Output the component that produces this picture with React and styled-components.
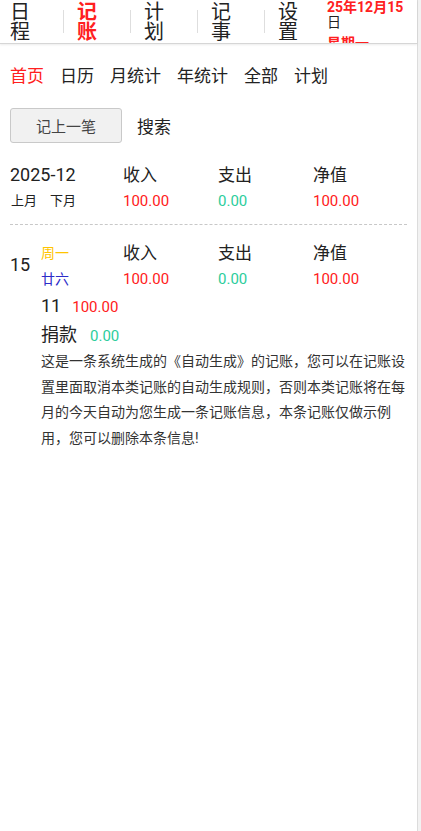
import React from 'react';
import styled, { createGlobalStyle } from 'styled-components';

const RED = '#ff2020';
const GREEN = '#2ccd9c';

const GlobalStyle = createGlobalStyle`
    html, body {
        margin: 0;
        padding: 0;
        background: #f2f2f2;
    }
    body {
        font-family: Roboto, "Noto Sans CJK SC", sans-serif;
        color: #222;
    }
`;

const Page = styled.div`
    width: 417px;
    min-height: 831px;
    background: #fff;
    border-right: 1px solid #dcdcdc;
`;

const Header = styled.div`
    height: 43px;
    display: flex;
    align-items: center;
    padding-left: 10px;
    border-bottom: 1px solid #d6d6d6;
    box-shadow: 0 1px 2px rgba(0, 0, 0, 0.08);
    overflow: hidden;
`;

const Tab = styled.div`
    width: 20px;
    font-size: 20px;
    line-height: 20px;
    color: ${(p) => (p.$active ? RED : '#222')};
    font-weight: ${(p) => (p.$active ? 700 : 400)};
    margin-right: 33px;
`;

const Divider = styled.div`
    width: 1px;
    height: 23px;
    background: #dedede;
    margin-right: 13px;
`;

const DateBlock = styled.div`
    align-self: flex-start;
    width: 80px;
    margin-left: -4px;
    font-size: 14px;
    line-height: 15px;
    font-weight: 700;
    color: ${RED};
`;

const DateDay = styled.span`
    font-weight: 400;
    color: #222;
`;

const Week = styled.div`
    margin-top: 6px;
`;

const Content = styled.div`
    padding: 0 10px;
`;

const SubNav = styled.div`
    display: flex;
    gap: 16px;
    margin-top: 20px;
    font-size: 17px;
    line-height: 24px;
`;

const NavItem = styled.span`
    color: ${(p) => (p.$active ? RED : '#222')};
`;

const Actions = styled.div`
    display: flex;
    align-items: center;
    gap: 15px;
    margin-top: 20px;
`;

const AddButton = styled.button`
    width: 112px;
    height: 35px;
    background: #f1f1f1;
    border: 1px solid #c9c9c9;
    border-radius: 3px;
    font-family: inherit;
    font-size: 15px;
    color: #444;
    padding: 0;
`;

const Search = styled.span`
    font-size: 17px;
    color: #222;
`;

const Summary = styled.div`
    display: grid;
    grid-template-columns: 113px 95px 95px 1fr;
    margin-top: 19px;
    padding-bottom: 10px;
    border-bottom: 1px dashed #c8c8c8;
`;

const Month = styled.div`
    font-size: 18px;
    line-height: 26px;
`;

const Label = styled.div`
    font-size: 17px;
    line-height: 26px;
`;

const Switch = styled.div`
    display: flex;
    gap: 13px;
    font-size: 13px;
    line-height: 26px;
    padding-left: 1px;
`;

const Amount = styled.div`
    font-size: 15px;
    line-height: 26px;
    color: ${(p) => (p.$kind === 'out' ? GREEN : RED)};
`;

const DayBlock = styled.div`
    display: grid;
    grid-template-columns: 31px 82px 95px 95px 1fr;
    grid-template-rows: 26px 26px;
    margin-top: 15px;
`;

const DayNum = styled.div`
    grid-row: 1 / span 2;
    align-self: center;
    font-size: 18px;
    margin-top: -3px;
`;

const WeekDay = styled.div`
    font-size: 14px;
    line-height: 26px;
    color: ${(p) => p.$color};
`;

const Detail = styled.div`
    padding-left: 31px;
`;

const ItemRow = styled.div`
    display: flex;
    align-items: baseline;
    gap: ${(p) => p.$gap}px;
    line-height: 30px;
    margin-top: ${(p) => p.$top || 0}px;
`;

const ItemName = styled.span`
    font-size: 18px;
`;

const ItemAmount = styled.span`
    font-size: 15px;
    color: ${(p) => (p.$kind === 'out' ? GREEN : RED)};
`;

const Note = styled.p`
    margin: -2px 0 0;
    font-size: 14px;
    line-height: 25.5px;
    color: #333;
`;

const App = () => {
    const tabs = ['日程', '记账', '计划', '记事', '设置'];
    const navs = ['首页', '日历', '月统计', '年统计', '全部', '计划'];

    return (
        <Page>
            <GlobalStyle />
            <Header>
                {tabs.map((t, i) => (
                    <React.Fragment key={t}>
                        <Tab $active={i === 1}>{t}</Tab>
                        {i < tabs.length - 1 && <Divider />}
                    </React.Fragment>
                ))}
                <DateBlock>
                    25年12月15<DateDay>日</DateDay>
                    <Week>星期一</Week>
                </DateBlock>
            </Header>
            <Content>
                <SubNav>
                    {navs.map((n, i) => (
                        <NavItem key={n} $active={i === 0}>
                            {n}
                        </NavItem>
                    ))}
                </SubNav>
                <Actions>
                    <AddButton>记上一笔</AddButton>
                    <Search>搜索</Search>
                </Actions>
                <Summary>
                    <Month>2025-12</Month>
                    <Label>收入</Label>
                    <Label>支出</Label>
                    <Label>净值</Label>
                    <Switch>
                        <span>上月</span>
                        <span>下月</span>
                    </Switch>
                    <Amount>100.00</Amount>
                    <Amount $kind="out">0.00</Amount>
                    <Amount>100.00</Amount>
                </Summary>
                <DayBlock>
                    <DayNum>15</DayNum>
                    <WeekDay $color="#ffc400">周一</WeekDay>
                    <Label>收入</Label>
                    <Label>支出</Label>
                    <Label>净值</Label>
                    <WeekDay $color="#2c2cc8">廿六</WeekDay>
                    <Amount>100.00</Amount>
                    <Amount $kind="out">0.00</Amount>
                    <Amount>100.00</Amount>
                </DayBlock>
                <Detail>
                    <ItemRow $gap={11} $top={-1}>
                        <ItemName>11</ItemName>
                        <ItemAmount>100.00</ItemAmount>
                    </ItemRow>
                    <ItemRow $gap={13} $top={-2}>
                        <ItemName>捐款</ItemName>
                        <ItemAmount $kind="out">0.00</ItemAmount>
                    </ItemRow>
                    <Note>
                        这是一条系统生成的《自动生成》的记账，您可以在记账设置里面取消本类记账的自动生成规则，否则本类记账将在每月的今天自动为您生成一条记账信息，本条记账仅做示例用，您可以删除本条信息!
                    </Note>
                </Detail>
            </Content>
        </Page>
    );
};

export default App;
